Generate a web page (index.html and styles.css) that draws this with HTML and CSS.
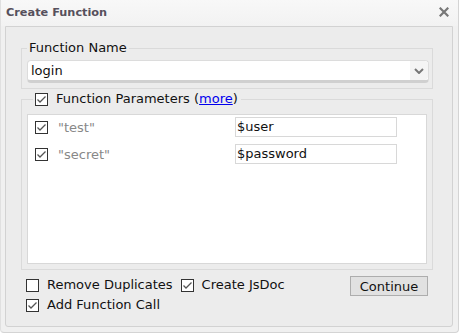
FILE: index.html
```html
<!DOCTYPE html>
<html>
<head>
<meta charset="utf-8">
<link rel="stylesheet" href="styles.css">
</head>
<body>
<div class="dialog">
  <div class="titlebar">
    <span class="title">Create Function</span>
    <svg class="close" width="10" height="10" viewBox="0 0 10 10"><path d="M1.5 1.5 L8.5 8.5 M8.5 1.5 L1.5 8.5" stroke="#777" stroke-width="2.2" stroke-linecap="square"/></svg>
  </div>
  <div class="panel">
    <fieldset class="fs fs-name">
      <legend class="lg">Function Name</legend>
      <div class="select">
        <span class="select-text">login</span>
        <span class="select-arrow"><svg width="10" height="6" viewBox="0 0 10 6"><path d="M1 1 L5 5 L9 1" fill="none" stroke="#777" stroke-width="2"/></svg></span>
      </div>
    </fieldset>
    <fieldset class="fs fs-params">
      <legend class="lg lg-check">
        <svg class="cb" width="13" height="13" viewBox="0 0 13 13"><rect x="0.5" y="0.5" width="12" height="12" fill="#fff" stroke="#333"/><path d="M2.5 6.5 L5 9 L10.5 3.5" fill="none" stroke="#555" stroke-width="1.3"/></svg>
        <span>Function Parameters (<a href="#" class="more">more</a>)</span>
      </legend>
      <div class="list">
        <div class="row">
          <span class="pname"><svg class="cb" width="13" height="13" viewBox="0 0 13 13"><rect x="0.5" y="0.5" width="12" height="12" fill="#fff" stroke="#333"/><path d="M2.5 6.5 L5 9 L10.5 3.5" fill="none" stroke="#555" stroke-width="1.3"/></svg><span class="pn">"test"</span></span>
          <span class="pinput">$user</span>
        </div>
        <div class="row">
          <span class="pname"><svg class="cb" width="13" height="13" viewBox="0 0 13 13"><rect x="0.5" y="0.5" width="12" height="12" fill="#fff" stroke="#333"/><path d="M2.5 6.5 L5 9 L10.5 3.5" fill="none" stroke="#555" stroke-width="1.3"/></svg><span class="pn">"secret"</span></span>
          <span class="pinput">$password</span>
        </div>
      </div>
    </fieldset>
    <div class="options">
      <div class="opt-col">
        <div class="opt-line">
          <label class="opt"><svg class="cb" width="13" height="13" viewBox="0 0 13 13"><rect x="0.5" y="0.5" width="12" height="12" fill="#fff" stroke="#333"/></svg>Remove Duplicates</label>
          <label class="opt"><svg class="cb" width="13" height="13" viewBox="0 0 13 13"><rect x="0.5" y="0.5" width="12" height="12" fill="#fff" stroke="#333"/><path d="M2.5 6.5 L5 9 L10.5 3.5" fill="none" stroke="#555" stroke-width="1.3"/></svg>Create JsDoc</label>
        </div>
        <div class="opt-line">
          <label class="opt"><svg class="cb" width="13" height="13" viewBox="0 0 13 13"><rect x="0.5" y="0.5" width="12" height="12" fill="#fff" stroke="#333"/><path d="M2.5 6.5 L5 9 L10.5 3.5" fill="none" stroke="#555" stroke-width="1.3"/></svg>Add Function Call</label>
        </div>
      </div>
      <button class="btn">Continue</button>
    </div>
  </div>
</div>
</body>
</html>
```
FILE: styles.css
```css
* { box-sizing: border-box; }
html, body { margin: 0; padding: 0; background: #fff; }
body { font-family: "DejaVu Sans", Verdana, sans-serif; font-size: 13px; color: #111; }
.dialog {
  width: 459px; height: 333px;
  background: #f0f0f0;
  border-right: 1px solid #d4d4d4;
  border-bottom: 1px solid #d4d4d4;
  border-left: 1px solid #e0e0e0;
  border-radius: 0 0 4px 4px;
  display: flex; flex-direction: column;
}
.titlebar {
  height: 26px;
  display: flex; align-items: center; justify-content: space-between;
  padding: 0 9px 2px 5px;
  background: linear-gradient(#f8f8f8, #f2f2f2);
}
.title { font-weight: bold; font-size: 11.3px; color: #56505c; }
.close { display: block; }
.panel {
  margin: 0 5px 0 4px;
  height: 301px;
  border: 1px solid #d2d2d2;
  border-radius: 0 0 3px 3px;
  background: #ececec;
  padding: 13px 19px 0 15px;
}
.fs {
  margin: 0; border: 1px solid #dadada;
  min-width: 0;
}
.lg { padding: 0 2px; margin-left: 0; line-height: 16px; color: #111; }
.fs-name { padding: 4px 3px 5px 5px; }
.select {
  height: 23px; display: flex; align-items: stretch;
  background: #fff;
  border: 1px solid #dcdcdc; border-bottom: 3px solid #d0d0d0;
  border-radius: 4px;
}
.select-text { flex: 1; padding-left: 3px; line-height: 19px; }
.select-arrow { width: 18px; background: #f4f4f4; display: flex; align-items: center; justify-content: center; border-radius: 0 4px 4px 0; }
.fs-params { margin-top: 2px; padding: 7px 5px 5px 5px; }
.lg-check { display: flex; align-items: center; gap: 8px; margin-left: 6px; padding: 0 3px 0 2px; }
.more { color: #0000ee; text-decoration: underline; }
.cb { display: block; flex: none; }
.list {
  height: 150px; background: #fff; border: 1px solid #d8d8d8;
  padding: 2px 0 0 7px;
  display: flex; flex-direction: column; gap: 7px;
}
.row { display: flex; align-items: center; height: 20px; }
.pname { width: 200px; display: flex; align-items: center; gap: 10px; }
.pn { color: #888; }
.pinput {
  width: 162px; height: 20px; border: 1px solid #d8d8d8; background: #fff;
  padding-left: 1px; line-height: 18px; color: #111;
}
.options { display: flex; justify-content: space-between; align-items: flex-start; padding: 8px 5px 0 5px; }
.opt-col { display: flex; flex-direction: column; gap: 6px; }
.opt-line { display: flex; gap: 8px; }
.opt { display: flex; align-items: center; gap: 8px; line-height: 14px; }
.btn {
  font-family: inherit; font-size: 13px; color: #111;
  width: 78px; height: 20px; padding: 0;
  background: #e1e1e1; border: 1px solid #adadad; border-radius: 0;
  margin-top: -2px;
}
```
